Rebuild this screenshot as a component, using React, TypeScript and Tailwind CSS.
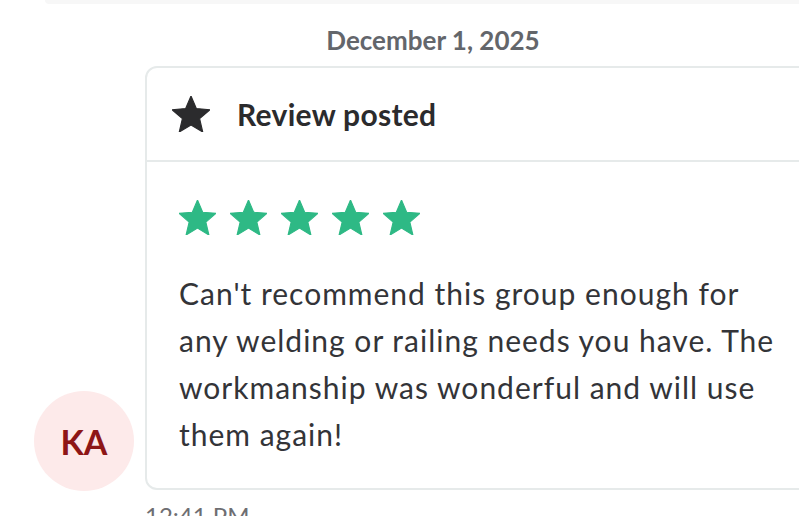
import React from "react";

const StarPath = "M12 17.27L18.18 21l-1.64-7.03L22 9.24l-7.19-.61L12 2 9.19 8.63 2 9.24l5.46 4.73L5.82 21z";

function Star({ className }: { className?: string }) {
  return (
    <svg viewBox="2 2 20 19" className={className} fill="currentColor" strokeLinejoin="round">
      <path d={StarPath} stroke="currentColor" strokeWidth="0.6" />
    </svg>
  );
}

export default function App() {
  const font = { fontFamily: "Lato, 'Noto Sans', sans-serif" };
  return (
    <div className="w-[799px] h-[516px] overflow-hidden bg-white relative" style={font}>
      <div className="ml-[45px] w-[800px] h-[4px] bg-[#f7f7f7] rounded-bl-[10px]" />
      <div className="ml-[45px] w-[776px] text-center mt-[20px] text-[26px] font-bold leading-[32px] text-[#63666b]">
        December 1, 2025
      </div>
      <div className="flex items-end mt-[10px]">
        <div className="ml-[34px] w-[100px] h-[100px] rounded-full bg-[#fdeaea] flex items-center justify-center text-[#8e1616] text-[34px] font-bold shrink-0 mb-[-1px]">
          KA
        </div>
        <div className="ml-[11px] w-[720px] shrink-0 border-2 border-[#e6eaea] rounded-[12px] bg-white">
          <div className="h-[94px] flex items-center pl-[25px] border-b-2 border-[#e6eaea]">
            <Star className="w-[38px] h-[36px] text-[#2b2b2d]" />
            <span className="ml-[27px] text-[30px] font-bold text-[#2b2b2d] tracking-[0.3px]">Review posted</span>
          </div>
          <div className="pl-[32px] pt-[38px] pb-[30px]">
            <div className="flex gap-[14px]">
              {[0, 1, 2, 3, 4].map((i) => (
                <Star key={i} className="w-[37px] h-[35px] text-[#2eb985]" />
              ))}
            </div>
            <p className="mt-[35px] w-[598px] text-[30px] leading-[47px] text-[#333438] tracking-[1px]">
              Can't recommend this group enough for any welding or railing needs you have. The workmanship was wonderful and will use them again!
            </p>
          </div>
        </div>
      </div>
      <div className="ml-[145px] mt-[12px] text-[24px] text-[#6e6e72] leading-[28px]">12:41 PM</div>
    </div>
  );
}
